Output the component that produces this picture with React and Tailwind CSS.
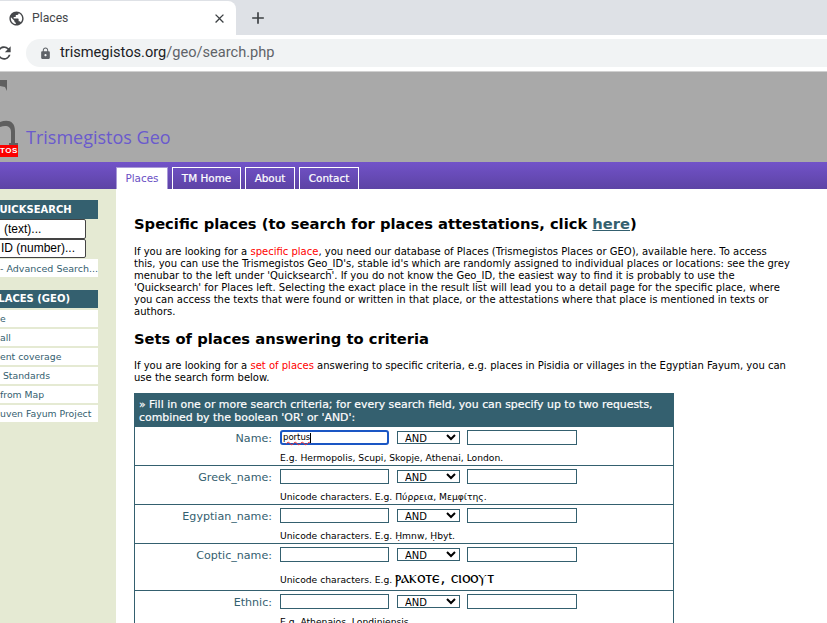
import React from 'react';
import { MdPublic, MdLock, MdRefresh, MdClose, MdAdd } from 'react-icons/md';

const verdana = { fontFamily: '"DejaVu Sans", Verdana, sans-serif' };

const rows = [
  { label: 'Name:', hint: 'E.g. Hermopolis, Scupi, Skopje, Athenai, London.', value: 'portus' },
  { label: 'Greek_name:', hint: 'Unicode characters. E.g. Πύρρεια, Μεμφίτης.' },
  { label: 'Egyptian_name:', hint: 'Unicode characters. E.g. Ḥmnw, Ḥbyt.' },
  { label: 'Coptic_name:', hint: 'Unicode characters. E.g. ', coptic: 'ⲣⲁⲕⲟⲧⲉ, ⲥⲓⲟⲟⲩⲧ' },
  { label: 'Ethnic:', hint: 'E.g. Athenaios, Londiniensis.' },
];

const menu = ['e', 'all', 'ent coverage', ' Standards', 'from Map', 'uven Fayum Project'];

function BrowserBar() {
  return (
    <div className="font-['Roboto',sans-serif]">
      <div className="h-[35px] bg-[#dee1e6] flex pt-px">
        <div className="w-[236px] bg-white rounded-tr-lg flex items-center pl-[8px] pr-[9px]">
          <MdPublic className="w-[17px] h-[17px] text-[#45474a]" />
          <span className="ml-[7px] text-[12.2px] text-[#45474a] flex-1">Places</span>
          <MdClose className="w-[15px] h-[15px] text-[#3c4043]" />
        </div>
        <div className="ml-[12px] flex items-center">
          <MdAdd className="w-[20px] h-[20px] text-[#3c4043]" />
        </div>
      </div>
      <div className="h-[36px] bg-white flex items-center border-b-[1px] border-[#d0d0d0] box-content">
        <MdRefresh className="w-[20px] h-[20px] -ml-[6px] text-[#45474a]" />
        <div className="ml-[12px] flex-1 h-[28px] bg-[#f1f3f4] rounded-l-full flex items-center pl-[13px]">
          <MdLock className="w-[13px] h-[13px] text-[#5f6368]" />
          <span className="ml-[8px] text-[14.6px] text-[#202124]">
            trismegistos.org<span className="text-[#5f6368]">/geo/search.php</span>
          </span>
        </div>
      </div>
    </div>
  );
}

function SiteHeader() {
  return (
    <div className="h-[90px] bg-[#a9a9a9] flex items-end pb-[5px]">
      <div className="relative w-[18px] h-[85px] shrink-0">
        <svg width="18" height="85" viewBox="0 0 18 85" className="absolute left-0 top-0">
          <path d="M0 8h7v11l-2-4-5-1z" fill="#5f5f5f" />
          <path d="M0 50c8-3 15-1 15 9v12h3v2H9v-2h2V60c0-6-5-7-11-5z" fill="#5f5f5f" />
        </svg>
        <div className="absolute left-0 bottom-0 w-[18px] h-[12px] bg-[#fb0000] text-white text-[8px] font-bold leading-[12px] font-['Liberation_Sans',sans-serif] tracking-[0.5px] text-right pr-[4px]">
          TOS
        </div>
      </div>
      <span className="ml-[8px] mb-[8px] text-[18px] leading-[24px] text-[#6a5acd] font-['Open_Sans',sans-serif]">
        Trismegistos Geo
      </span>
    </div>
  );
}

function NavBar() {
  const tabs = [
    { name: 'TM Home', cls: 'w-[69px]' },
    { name: 'About', cls: 'w-[50px]' },
    { name: 'Contact', cls: 'w-[60px]' },
  ];
  return (
    <div className="h-[27px] bg-gradient-to-b from-[#7253c9] to-[#5d43a5] flex items-end pl-[116px]" style={verdana}>
      <div className="h-[22px] w-[52px] bg-white border-t border-x border-[#a99ad8] flex items-center justify-center pt-px text-[10.4px] text-[#6a4fc4]">
        Places
      </div>
      {tabs.map((t) => (
        <div key={t.name} className={`ml-[4px] h-[22px] ${t.cls} border-t border-x border-white flex items-center justify-center pt-px text-[10.4px] text-white [-webkit-text-stroke:0.2px_white]`}>
          {t.name}
        </div>
      ))}
    </div>
  );
}

function Sidebar() {
  return (
    <div className="w-[116px] shrink-0 bg-[#e5ead3] overflow-hidden pt-[11px]" style={verdana}>
      <div className="w-[132px] -ml-[34px]">
        <div className="h-[19px] bg-[#34606f] text-white text-[10px] font-bold leading-[19px] pl-[25px]">QUICKSEARCH</div>
        <div className="h-[20px] border border-[#444] bg-white rounded-[2px] w-[120px] text-[12px] leading-[18px] pl-[37px] font-['Liberation_Sans',sans-serif]">
          (text)...
        </div>
        <div className="h-[19px] border border-[#444] bg-white rounded-[2px] w-[120px] text-[12px] leading-[17px] pl-[34px] font-['Liberation_Sans',sans-serif]">
          ID (number)...
        </div>
        <div className="h-[19px] bg-white text-[#34606f] text-[9.5px] leading-[19px] border-t border-[#e5ead3] pl-[34px] whitespace-nowrap overflow-hidden">
          - Advanced Search...
        </div>
        <div className="h-[18px] mt-[13px] bg-[#34606f] text-white text-[10px] font-bold leading-[18px] pl-[25px] whitespace-nowrap">PLACES (GEO)</div>
        {menu.map((m) => (
          <div key={m} className="h-[19px] bg-white border-t-2 border-[#e5ead3] first:border-t-0 first:mt-px text-[#34606f] text-[9.3px] leading-[17px] pl-[34px] whitespace-pre">
            {m}
          </div>
        ))}
      </div>
    </div>
  );
}

function SearchRow({ row }) {
  return (
    <div className="flex border-b border-[#34606f] last:border-b-0">
      <div className="w-[137px] shrink-0 text-right text-[#34606f] text-[11.1px] leading-[17px] pt-[3px]">{row.label}</div>
      <div className="ml-[8px] flex-1 pt-[3px]">
        <div className="flex items-center">
          {row.value ? (
            <div className="w-[109px] h-[15px] border-2 border-[#1a56c4] rounded-[3px] pl-px text-[8.5px] leading-[11px] text-black flex items-center">
              <span className="underline decoration-wavy decoration-[#e33] decoration-1">{row.value}</span>
              <span className="w-px h-[10px] bg-black" />
            </div>
          ) : (
            <input className="w-[109px] h-[15px] border border-[#34606f] outline-none" />
          )}
          <select className="ml-[8px] w-[63px] h-[13px] border border-[#34606f] text-[10px] leading-[11px] pl-[3px] bg-white text-black">
            <option>AND</option>
          </select>
          <input className="ml-[7px] w-[110px] h-[15px] border border-[#34606f] outline-none" />
        </div>
        <div className={row.coptic ? 'mt-[4px] h-[24px] text-[9.2px] leading-[24px] text-black' : 'mt-[5px] h-[15px] text-[9.2px] leading-[15px] text-black'}>
          {row.hint}
          {row.coptic && <span className="text-[16.5px] font-normal">{row.coptic}</span>}
        </div>
      </div>
    </div>
  );
}

function Content() {
  return (
    <div className="flex-1 pl-[18px] pt-[25px] text-black overflow-hidden" style={verdana}>
      <h1 className="text-[14.72px] font-bold leading-[19px] whitespace-nowrap">
        Specific places (to search for places attestations, click{' '}
        <a className="text-[#34606f] underline">here</a>)
      </h1>
      <p className="mt-[13px] text-[10.02px] leading-[12px] whitespace-nowrap">
        If you are looking for a <span className="text-[#f00]">specific place</span>, you need our database of Places (Trismegistos Places or GEO), available here. To access<br />
        this, you can use the Trismegistos Geo_ID's, stable id's which are randomly assigned to individual places or locations: see the grey<br />
        menubar to the left under 'Quicksearch'. If you do not know the Geo_ID, the easiest way to find it is probably to use the<br />
        'Quicksearch' for Places left. Selecting the exact place in the result list will lead you to a detail page for the specific place, where<br />
        you can access the texts that were found or written in that place, or the attestations where that place is mentioned in texts or<br />
        authors.
      </p>
      <h2 className="mt-[11px] text-[14.72px] font-bold leading-[19px]">Sets of places answering to criteria</h2>
      <p className="mt-[12px] text-[10.02px] leading-[12px] whitespace-nowrap">
        If you are looking for a <span className="text-[#f00]">set of places</span> answering to specific criteria, e.g. places in Pisidia or villages in the Egyptian Fayum, you can<br />
        use the search form below.
      </p>
      <div className="mt-[9px] w-[540px] border-x border-[#34606f]">
        <div className="h-[34px] bg-[#34606f] text-white text-[10.9px] leading-[13px] px-[5px] pt-[5px] whitespace-nowrap -mx-px [-webkit-text-stroke:0.2px_white]">
          » Fill in one or more search criteria; for every search field, you can specify up to two requests,<br />
          combined by the boolean 'OR' or 'AND':
        </div>
        {rows.map((r) => (
          <SearchRow key={r.label} row={r} />
        ))}
      </div>
    </div>
  );
}

export default function App() {
  return (
    <div className="h-[623px] w-[827px] overflow-hidden bg-white flex flex-col">
      <BrowserBar />
      <SiteHeader />
      <NavBar />
      <div className="flex flex-1 min-h-0">
        <Sidebar />
        <Content />
      </div>
    </div>
  );
}
